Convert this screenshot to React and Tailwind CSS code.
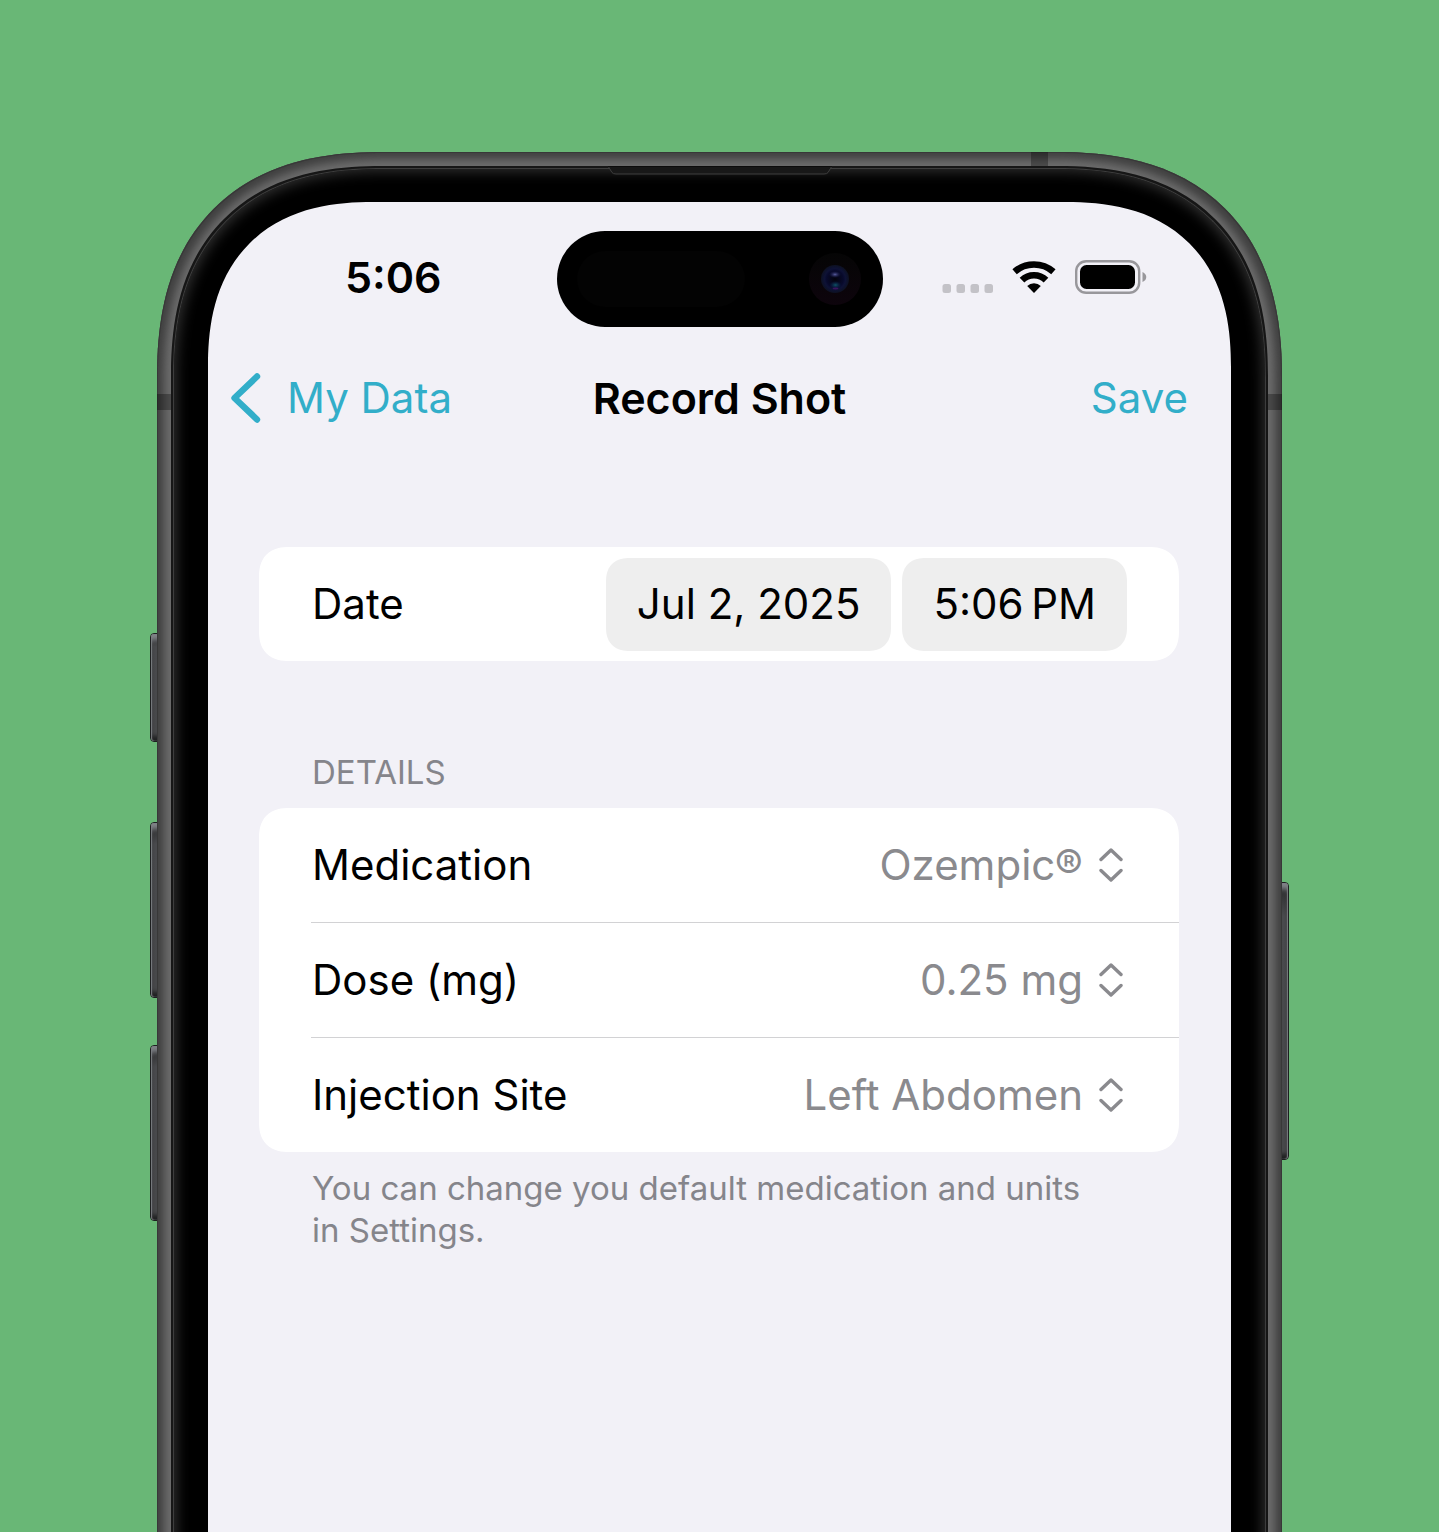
import React from "react";

const rows = [
  { id: "medication", label: "Medication", value: "Ozempic®" },
  { id: "dose", label: "Dose (mg)", value: "0.25 mg" },
  { id: "site", label: "Injection Site", value: "Left Abdomen" },
];

function BackChevron() {
  return (
    <svg className="h-[50px] w-[30px] shrink-0" viewBox="0 0 30 50" fill="none" aria-hidden="true">
      <path d="M26 3.5 L3.5 25 L26 46.5" stroke="currentColor" strokeWidth="6.4" strokeLinecap="round" strokeLinejoin="round" />
    </svg>
  );
}

function UpDownChevron() {
  return (
    <svg className="pointer-events-none h-[34px] w-6 shrink-0" viewBox="0 0 24 34" fill="none" aria-hidden="true">
      <path
        d="M2 11.5 L12 2 L22 11.5 M2 22.5 L12 32 L22 22.5"
        stroke="#8a8a8e"
        strokeWidth="3.4"
        strokeLinecap="round"
        strokeLinejoin="round"
      />
    </svg>
  );
}

function NoSignal() {
  return (
    <svg className="h-[34px] w-[51px]" viewBox="0 0 51 34" aria-hidden="true">
      {[0.5, 14.5, 28.5, 42.5].map((x) => (
        <rect key={x} x={x} y="24" width="8.5" height="9" rx="2.5" fill="#c3c2c7" />
      ))}
    </svg>
  );
}

function Wifi() {
  return (
    <svg className="h-[34px] w-11" viewBox="0 0 44 34" aria-hidden="true">
      <g fill="none" stroke="#000" strokeWidth="6.6">
        <path d="M2.6 11.8 A29.5 29.5 0 0 1 41.4 11.8" />
        <path d="M10 20.2 A17 17 0 0 1 34 20.2" />
      </g>
      <path d="M15.2 26 A10 10 0 0 1 28.8 26 L22 33 Z" fill="#000" />
    </svg>
  );
}

function Battery() {
  return (
    <svg className="h-[34px] w-[72px]" viewBox="0 0 72 34" aria-hidden="true">
      <rect x="1.2" y="1.2" width="63" height="31.6" rx="10" fill="none" stroke="#98979b" strokeWidth="2.4" />
      <rect x="5" y="5" width="55" height="24" rx="6.5" fill="#000" />
      <path d="M67.5 12 C72.5 14 72.5 20 67.5 22 Z" fill="#98979b" />
    </svg>
  );
}

function DynamicIsland() {
  return (
    <div className="flex h-24 w-[326px] items-center justify-between rounded-full bg-black pr-[22px] pl-5">
      <div className="h-14 w-[168px] rounded-full bg-[#030303]" />
      <svg className="h-[52px] w-[52px]" viewBox="0 0 52 52" aria-hidden="true">
        <defs>
          <linearGradient id="lens-rim" x1="0" y1="0" x2="0" y2="1">
            <stop offset="0" stopColor="#050505" />
            <stop offset="1" stopColor="#0d040c" />
          </linearGradient>
          <radialGradient id="lens">
            <stop offset="0" stopColor="#03030c" />
            <stop offset="0.6" stopColor="#080a2c" />
            <stop offset="0.75" stopColor="#0e1236" />
            <stop offset="1" stopColor="#0d1122" />
          </radialGradient>
          <radialGradient id="glint">
            <stop offset="0" stopColor="#5a5ea0" />
            <stop offset="1" stopColor="#1a1c55" stopOpacity="0" />
          </radialGradient>
          <radialGradient id="glow">
            <stop offset="0" stopColor="#0e5568" />
            <stop offset="1" stopColor="#0a2450" stopOpacity="0" />
          </radialGradient>
        </defs>
        <circle cx="26" cy="26" r="26" fill="url(#lens-rim)" />
        <circle cx="26" cy="26" r="14" fill="url(#lens)" />
        <ellipse cx="26" cy="21.5" rx="6" ry="3.5" fill="url(#glint)" />
        <ellipse cx="26.5" cy="32" rx="6" ry="4" fill="url(#glow)" />
        <ellipse cx="26.5" cy="35.5" rx="3" ry="1" fill="#3a145e" />
      </svg>
    </div>
  );
}

function SideButton({ className }) {
  return (
    <div
      className={
        "absolute w-3 rounded-[4px] border border-[#1d1f20] bg-linear-to-b from-[#232526] via-[#4a4b4e] to-[#1c1d1e] " +
        className
      }
    >
      <div className="h-full rounded-[3px] bg-linear-to-b from-[#2a2b2c] from-0% via-[#4a4b4e] via-12% to-[#48494b] to-90% shadow-[inset_1px_0_1px_#7b7e81,inset_-1px_0_1px_#7b7e81,inset_0_8px_5px_-2px_#808388,inset_0_-5px_4px_#202122]" />
    </div>
  );
}

function StatusBar() {
  return (
    <div className="grid grid-cols-[1fr_auto_1fr] items-center pt-[29px]">
      <div className="pb-1 pl-[22px] text-center text-[43px] leading-[52px] font-semibold">5:06</div>
      <DynamicIsland />
      <div className="flex items-center justify-center gap-[19px] pr-6 pb-1">
        <NoSignal />
        <Wifi />
        <Battery />
      </div>
    </div>
  );
}

function NavBar() {
  return (
    <nav className="grid h-[142px] grid-cols-[1fr_auto_1fr] items-center pr-[43px] pl-[23px] text-[42px] leading-[52px]">
      <button type="button" className="flex items-center gap-[26px] justify-self-start text-[#32aec9]">
        <BackChevron />
        My Data
      </button>
      <h1 className="pl-5 text-[43px] font-semibold">Record Shot</h1>
      <button type="button" className="justify-self-end text-[#32aec9]">
        Save
      </button>
    </nav>
  );
}

function SelectRow({ row, last }) {
  return (
    <div className="pl-[52px]">
      <div className={"flex h-[114px] items-center justify-between pr-14 pl-px " + (last ? "" : "border-b border-[#d2d2d4] box-content")}>
        <label htmlFor={row.id}>{row.label}</label>
        <div className="flex items-center gap-4 text-[#8a8a8e]">
          <select id={row.id} defaultValue={row.value} className="field-sizing-content appearance-none bg-transparent text-right">
            <option>{row.value}</option>
          </select>
          <UpDownChevron />
        </div>
      </div>
    </div>
  );
}

export default function App() {
  return (
    <main className="flex min-h-screen flex-col items-center overflow-hidden bg-[#69b776] pt-[152px] font-['Inter',sans-serif] text-black">
      <div className="relative -mb-8 flex w-full max-w-[1125px] flex-1 flex-col">
        <SideButton className="top-[481px] -left-[7px] h-[109px]" />
        <SideButton className="top-[670px] -left-[7px] h-[176px]" />
        <SideButton className="top-[893px] -left-[7px] h-[176px]" />
        <SideButton className="top-[730px] -right-[7px] h-[278px]" />
        <div className="relative flex flex-1 flex-col overflow-hidden rounded-t-[226px] bg-[#6c6c6c] px-4 pt-4 shadow-[inset_0_0_0_1px_#383838,inset_0_0_8px_7px_#404040] [corner-shape:superellipse(1.26)]">
          <div className="absolute top-0 right-[234px] h-4 w-[17px] bg-black/30" />
          <div className="absolute top-[242px] left-0 h-4 w-4 bg-black/30" />
          <div className="absolute top-[242px] right-0 h-4 w-4 bg-black/30" />
          <div className="relative flex flex-1 flex-col rounded-t-[210px] border-x border-t border-[#3d3d3d] bg-black px-[34px] pt-[33px] shadow-[0_0_0_2px_#161616,inset_0_0_14px_2px_#333333] [corner-shape:superellipse(1.26)]">
            <svg className="absolute -top-[3px] left-1/2 h-[9px] w-56 -translate-x-1/2" viewBox="0 0 224 9" aria-hidden="true">
              <path d="M0 0 L4 6.5 Q5 8 8 8 H216 Q219 8 220 6.5 L224 0 Z" fill="#181818" stroke="#3f3f3f" />
              <path d="M0 0 H224" stroke="#0c0c0c" strokeWidth="2" />
            </svg>
            <div className="flex-1 rounded-t-[165px] bg-[#f2f1f7] pb-16 [corner-shape:superellipse(1.26)]">
              <StatusBar />
              <NavBar />
              <div className="pt-[78px] pr-[52px] pl-[51px] text-[42px] leading-[52px]">
                <section className="flex h-[114px] items-center justify-between rounded-[30px] bg-white pr-[52px] pl-[53px] [corner-shape:superellipse(1.26)]">
                  <span>Date</span>
                  <div className="flex gap-[11px]">
                    <button type="button" className="h-[93px] rounded-3xl bg-[#eeeeee] px-[31px] [corner-shape:superellipse(1.26)]">
                      Jul 2, 2025
                    </button>
                    <button type="button" className="h-[93px] rounded-3xl bg-[#eeeeee] px-[31px] [corner-shape:superellipse(1.26)]">
                      5:06&#8202;&#8202;PM
                    </button>
                  </div>
                </section>
                <h2 className="mt-[90px] mb-[15px] pl-[53px] text-[33px] leading-[42px] text-[#85858b]">DETAILS</h2>
                <section className="overflow-hidden rounded-[30px] bg-white [corner-shape:superellipse(1.26)]">
                  {rows.map((row, i) => (
                    <SelectRow key={row.id} row={row} last={i === rows.length - 1} />
                  ))}
                </section>
                <p className="pt-[15px] pr-20 pl-[53px] text-[33px] leading-[42px] text-[#85858b]">
                  You can change you default medication and units in Settings.
                </p>
              </div>
            </div>
          </div>
        </div>
      </div>
    </main>
  );
}
